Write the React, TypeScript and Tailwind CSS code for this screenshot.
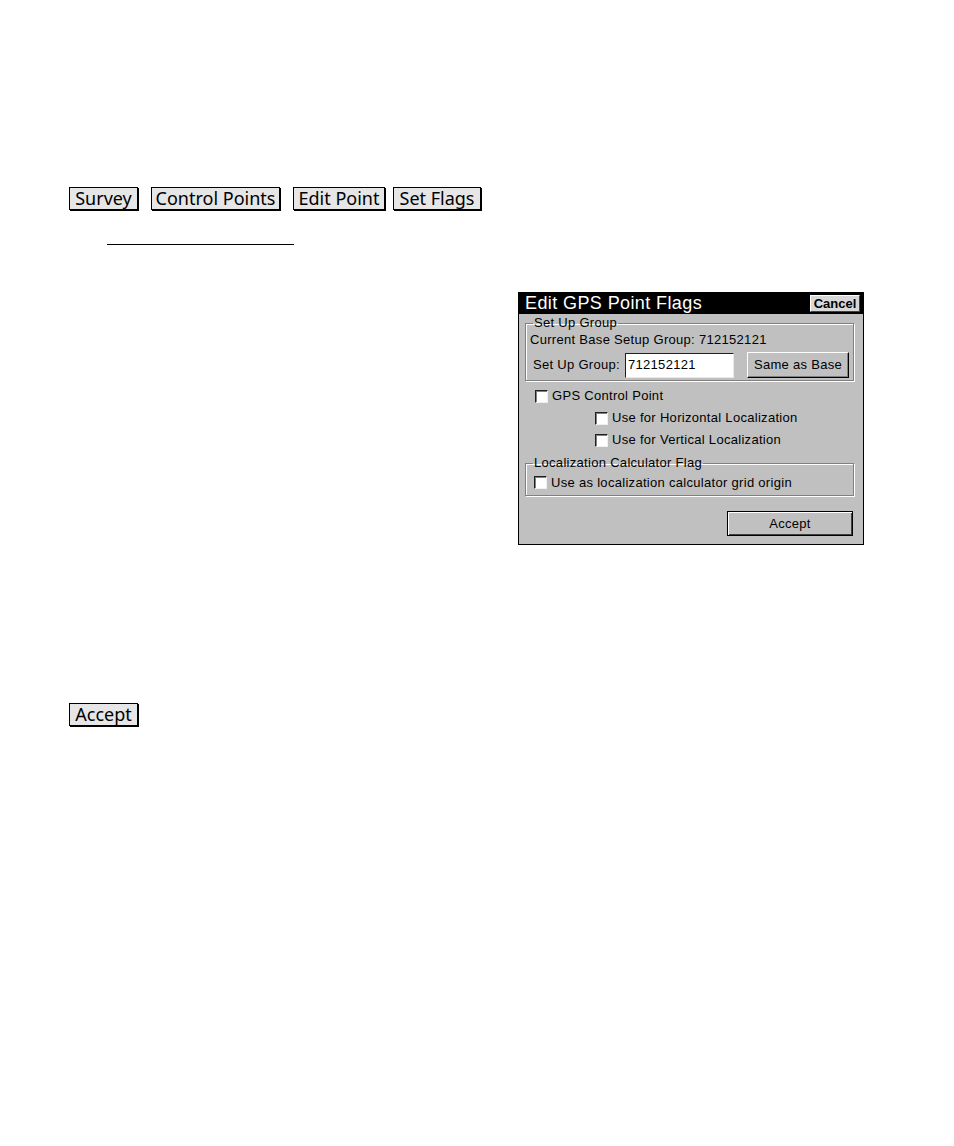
import React from "react";

const topBtn =
  "h-[23px] border border-black bg-[#e6e6e6] shadow-[1px_1px_0_#000] flex items-center justify-center text-[18px] leading-[21px] text-black";

function Check({ label, className = "" }: { label: string; className?: string }) {
  return (
    <div className={"flex items-center " + className}>
      <div className="w-[13px] h-[13px] bg-white border-t border-l border-t-[#202020] border-l-[#202020] border-r border-b border-r-[#f0f0f0] border-b-[#f0f0f0] shadow-[inset_1px_1px_0_#808080]" />
      <span className="ml-[4px]">{label}</span>
    </div>
  );
}

export default function App() {
  return (
    <div className="min-h-screen bg-white pt-[187px] pl-[69px]" style={{ fontFamily: "'Noto Sans', sans-serif" }}>
      <div className="flex h-[24px] items-start">
        <div className={topBtn + " w-[69px]"}>Survey</div>
        <div className={topBtn + " w-[129px] ml-[13px]"}>Control Points</div>
        <div className={topBtn + " w-[92px] ml-[13px]"}>Edit Point</div>
        <div className={topBtn + " w-[88px] ml-[8px]"}>Set Flags</div>
      </div>
      <div className="ml-[38px] mt-[33px] w-[187px] h-[1px] bg-black" />

      <div
        className="ml-[449px] mt-[47px] w-[346px] h-[253px] border border-black bg-[#c0c0c0] text-[13px] leading-[14px] tracking-[0.3px] text-black flex flex-col"
        style={{ fontFamily: "'Liberation Sans', Arial, sans-serif" }}
      >
        <div className="h-[21px] bg-black flex items-center justify-between">
          <span className="pl-[6px] text-white text-[18px] leading-[21px] tracking-[0.4px]">Edit GPS Point Flags</span>
          <div className="mr-[3px] w-[50px] h-[17px] bg-[#d8d8d8] border border-t-white border-l-white border-r-[#404040] border-b-[#404040] flex items-center justify-center font-bold text-[13px] leading-[15px] tracking-normal">
            Cancel
          </div>
        </div>

        <fieldset className="mt-[2px] ml-[6px] w-[329px] border border-[#808080] shadow-[inset_1px_1px_0_#fff,1px_1px_0_#fff] p-0">
          <legend className="ml-[7px] px-[1px] leading-[14px]">Set Up Group</legend>
          <div className="h-[20px] leading-[20px] pl-[4px]">Current Base Setup Group: 712152121</div>
          <div className="mt-[2px] h-[26px] flex items-center">
            <span className="pl-[7px] w-[99px]">Set Up Group:</span>
            <div className="w-[109px] h-[25px] bg-white border border-t-[#202020] border-l-[#202020] border-r-[#e8e8e8] border-b-[#e8e8e8] flex items-center pl-[2px]">
              712152121
            </div>
            <div className="ml-[13px] w-[102px] h-[26px] border border-t-white border-l-white border-r-black border-b-black shadow-[inset_-1px_-1px_0_#808080] flex items-center justify-center">
              Same as Base
            </div>
          </div>
          <div className="h-[2px]" />
        </fieldset>

        <Check label="GPS Control Point" className="mt-[4px] h-[22px] pl-[16px]" />
        <Check label="Use for Horizontal Localization" className="h-[22px] pl-[76px]" />
        <Check label="Use for Vertical Localization" className="h-[22px] pl-[76px]" />

        <fieldset className="mt-[5px] ml-[6px] w-[329px] border border-[#808080] shadow-[inset_1px_1px_0_#fff,1px_1px_0_#fff] p-0">
          <legend className="ml-[7px] px-[1px] leading-[14px]">Localization Calculator Flag</legend>
          <Check label="Use as localization calculator grid origin" className="h-[25px] pl-[8px]" />
        </fieldset>

        <div className="mt-[15px] flex justify-end pr-[10px]">
          <div className="w-[126px] h-[25px] border border-black shadow-[inset_1px_1px_0_#fff,inset_-1px_-1px_0_#404040] flex items-center justify-center">
            Accept
          </div>
        </div>
      </div>

      <div className={topBtn + " w-[69px] mt-[158px]"}>Accept</div>
    </div>
  );
}
